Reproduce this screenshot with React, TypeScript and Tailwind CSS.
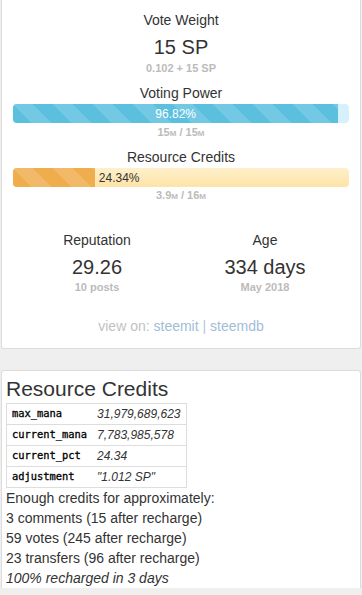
const sans = { fontFamily: '"Liberation Sans", Arial, sans-serif' };

function Unit({ n, u }: { n: string; u: string }) {
  return (
    <>
      {n}
      <span className="text-[8px]">{u}</span>
    </>
  );
}

function StripedBar({
  pct,
  fill,
  track,
  labelInside,
}: {
  pct: number;
  fill: string;
  track: string;
  labelInside: boolean;
}) {
  const stripes =
    'linear-gradient(45deg, rgba(255,255,255,.15) 25%, transparent 25%, transparent 50%, rgba(255,255,255,.15) 50%, rgba(255,255,255,.15) 75%, transparent 75%, transparent)';
  return (
    <div className={`flex h-[19px] overflow-hidden rounded-[4px] ${track}`}>
      <div
        className={`flex h-full items-center justify-center text-[12px] text-white ${fill}`}
        style={{ width: `${pct}%`, backgroundImage: stripes, backgroundSize: '40px 40px' }}
      >
        {labelInside && `${pct}%`}
      </div>
      {!labelInside && (
        <span className="flex items-center pl-[4px] text-[12px] text-[#333]">{pct}%</span>
      )}
    </div>
  );
}

export default function App() {
  return (
    <div className="min-h-[595px] bg-[#efefef] px-px text-[#333]" style={sans}>
      <div className="rounded-b-[3px] border-x border-b border-[#dcdcdc] bg-white px-[11px] pb-[12px] pt-[10px] text-center">
        <div className="text-[14px] leading-[20px]">Vote Weight</div>
        <div className="mt-[3px] text-[20px] leading-[28px]">15 SP</div>
        <div className="text-[11px] font-bold leading-[14px] text-[#bbb]">0.102 + 15 SP</div>

        <div className="mt-[8px] text-[14px] leading-[20px]">Voting Power</div>
        <div className="mt-[1px]">
          <StripedBar pct={96.82} fill="bg-[#5bc0de]" track="bg-[#d6f1fb]" labelInside />
        </div>
        <div className="mt-[2px] text-[11px] font-bold leading-[14px] text-[#bbb]">
          <Unit n="15" u="M" /> / <Unit n="15" u="M" />
        </div>

        <div className="mt-[6px] text-[14px] leading-[20px]">Resource Credits</div>
        <div className="mt-[1px]">
          <StripedBar
            pct={24.34}
            fill="bg-[#f0ad4e]"
            track="bg-gradient-to-b from-[#fff0cc] to-[#fde3a6]"
            labelInside={false}
          />
        </div>
        <div className="mt-[1px] text-[11px] font-bold leading-[14px] text-[#bbb]">
          <Unit n="3.9" u="M" /> / <Unit n="16" u="M" />
        </div>

        <div className="mt-[26px] grid grid-cols-2">
          <div>
            <div className="text-[14px] leading-[20px]">Reputation</div>
            <div className="mt-[4px] text-[20px] leading-[26px]">29.26</div>
            <div className="text-[11px] font-bold leading-[14px] text-[#bbb]">10 posts</div>
          </div>
          <div>
            <div className="text-[14px] leading-[20px]">Age</div>
            <div className="mt-[4px] text-[20px] leading-[26px]">334 days</div>
            <div className="text-[11px] font-bold leading-[14px] text-[#bbb]">May 2018</div>
          </div>
        </div>

        <div className="mt-[22px] text-[14px] leading-[20px] text-[#c2c2c2]">
          view on: <a className="text-[#a2bdd8]">steemit</a>{' '}
          <span className="text-[#b5c6d8]">|</span> <a className="text-[#a2bdd8]">steemdb</a>
        </div>
      </div>

      <div className="mt-[21px] rounded-t-[3px] border-x border-t border-[#dcdcdc] bg-white px-[4px] pt-[6px]">
        <h3 className="text-[21px] leading-[24px]">Resource Credits</h3>
        <table className="mt-[2px] w-[176px] border-collapse border border-[#ddd] text-left">
          <tbody>
            {[
              ['max_mana', '31,979,689,623'],
              ['current_mana', '7,783,985,578'],
              ['current_pct', '24.34'],
              ['adjustment', '"1.012 SP"'],
            ].map(([k, v]) => (
              <tr key={k} className="h-[21px] border-t border-[#ddd]">
                <td
                  className="px-[5px] py-0 text-[10.4px] text-black [-webkit-text-stroke:0.3px_black]"
                  style={{ fontFamily: '"DejaVu Sans Mono", monospace' }}
                >
                  {k}
                </td>
                <td className="px-[5px] py-0 text-[12px] italic">{v}</td>
              </tr>
            ))}
          </tbody>
        </table>
        <div className="text-[14px] leading-[20px]">
          <div>Enough credits for approximately:</div>
          <div>3 comments (15 after recharge)</div>
          <div>59 votes (245 after recharge)</div>
          <div>23 transfers (96 after recharge)</div>
          <div className="italic">100% recharged in 3 days</div>
        </div>
      </div>
    </div>
  );
}
